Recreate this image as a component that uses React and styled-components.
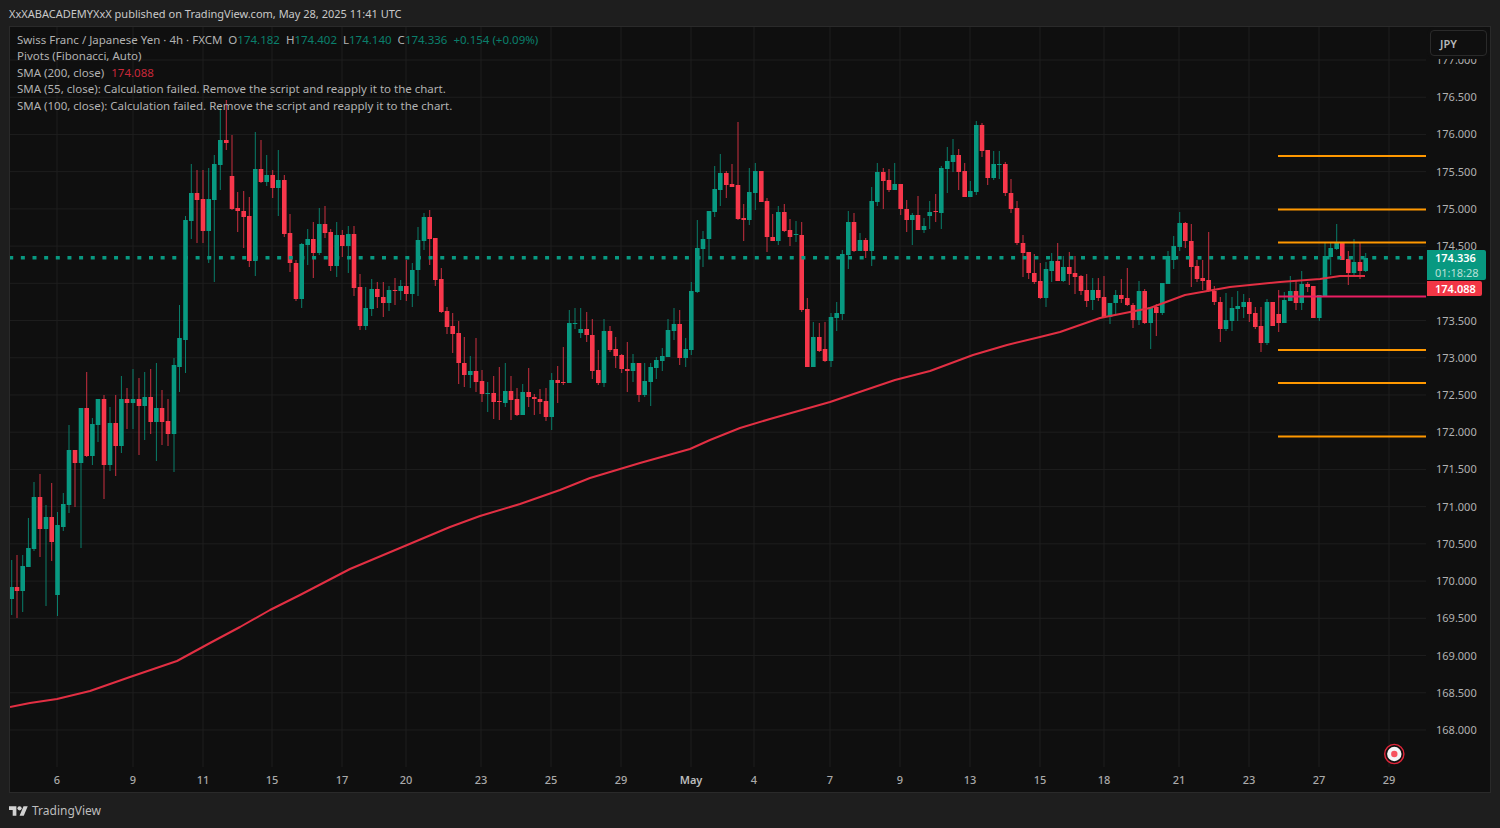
import React from 'react'
import styled, { createGlobalStyle } from 'styled-components'

const UI_FONT = '"Noto Sans", "Open Sans", "Liberation Sans", sans-serif'
const GREEN = '#089981'
const RED = '#f7374b'

// [x, body top, body bottom, wick top, wick bottom, colour]
const CANDLES = [
  [11.7,587,599,560,615,'g'],[17,587,591,555,618,'r'],[22.7,566,591,555,612,'g'],[28.4,548,567,518,567,'g'],
  [34,497,549,482,551,'g'],[40,497,529,474,557,'r'],[46,517,529,505,606,'g'],[51.7,517,542,483,561,'r'],
  [57.5,525,595,512,616,'g'],[63.3,504,527,493,531,'g'],[69,450,505,425,513,'g'],[75,450,463,450,507,'r'],
  [81,408,463,408,548,'g'],[86.7,408,456,372,457,'r'],[92.4,424,456,418,465,'g'],[98,399,425,399,442,'g'],
  [104,399,465,395,499,'r'],[110,423,465,407,471,'g'],[115.7,423,446,395,476,'r'],[121.4,399,446,376,453,'g'],
  [127,399,403,388,429,'r'],[133,399,403,369,429,'g'],[139,399,406,378,455,'r'],[144.7,397,406,372,440,'g'],
  [150.7,397,422,369,434,'r'],[156.4,408,422,363,461,'g'],[162,408,422,390,445,'r'],[168,421,434,399,446,'r'],
  [174,365,434,358,472,'g'],[179.5,338,367,305,392,'g'],[185.5,220,340,216,373,'g'],[191.3,193,221,164,239,'g'],
  [197,193,200,170,243,'r'],[203,199,231,170,243,'r'],[208.7,199,231,168,263,'g'],[214.3,164,200,155,282,'g'],
  [220.3,140,165,108,190,'g'],[226.3,140,143,100,150,'r'],[232,176,209,135,210,'r'],[237.7,208,211,192,232,'r'],
  [243.7,211,217,191,248,'r'],[249.3,216,261,197,267,'r'],[255.3,169,261,132,276,'g'],[261,169,182,140,183,'r'],
  [266.7,175,182,155,186,'g'],[272.7,175,188,170,198,'r'],[278.3,180,188,150,216,'g'],[284.3,180,234,175,237,'r'],
  [290,233,263,214,272,'r'],[296,263,299,260,301,'r'],[301.7,244,299,243,308,'g'],[307.7,239,245,229,265,'g'],
  [313.3,239,253,222,278,'r'],[319.3,224,253,208,255,'g'],[325,224,233,206,238,'r'],[330.7,232,266,229,271,'r'],
  [336.7,235,266,222,277,'g'],[342.3,235,246,230,257,'r'],[348.3,234,246,226,273,'g'],[354,234,288,226,296,'r'],
  [360,287,326,274,330,'r'],[365.7,308,326,287,330,'g'],[371.7,289,309,279,316,'g'],[377.3,289,297,282,308,'r'],
  [383.3,297,303,282,317,'r'],[389,290,303,286,311,'g'],[395,290,291,278,305,'r'],[400.7,286,291,280,300,'g'],
  [406.3,286,294,260,301,'r'],[412.3,270,294,263,307,'g'],[418,240,270,227,296,'g'],[424,217,241,213,250,'g'],
  [429.7,217,239,210,265,'r'],[435.3,238,280,239,286,'r'],[441.3,279,312,268,313,'r'],[447,311,327,307,334,'r'],
  [452.7,326,334,313,353,'r'],[458.7,333,363,321,384,'r'],[464.3,363,375,337,387,'r'],[470.3,371,375,356,388,'g'],
  [476,371,382,338,392,'r'],[482,381,394,370,402,'r'],[487.7,393,394,382,412,'g'],[493.7,393,402,376,419,'r'],
  [499.3,401,402,367,420,'r'],[505.3,391,403,363,407,'g'],[511,391,400,376,420,'r'],[517,399,415,388,416,'r'],
  [522.7,392,415,384,415,'g'],[528.7,392,397,368,407,'r'],[534.3,397,399,394,415,'r'],[540,399,402,389,414,'r'],
  [546,401,417,388,421,'r'],[551.7,380,417,373,430,'g'],[557.7,380,383,366,403,'r'],[563.3,382,383,347,385,'r'],
  [569.3,323,383,310,383,'g'],[575,323,324,308,329,'g'],[580.7,329,333,308,338,'g'],[586.7,329,335,312,342,'r'],
  [592.3,335,371,319,379,'r'],[598.3,370,383,350,385,'r'],[604,331,383,319,387,'g'],[610,331,350,326,352,'r'],
  [615.7,349,356,337,368,'r'],[621.7,355,369,354,373,'r'],[627.3,369,371,342,392,'r'],[633,363,371,354,382,'g'],
  [639,363,395,363,402,'r'],[644.7,381,395,363,397,'g'],[650.7,367,382,363,406,'g'],[656.3,360,368,357,379,'g'],
  [662.3,356,361,348,371,'g'],[668,330,357,319,357,'g'],[674,324,331,308,340,'g'],[679.7,324,358,310,365,'r'],
  [685.7,349,358,338,367,'g'],[691.3,291,350,282,355,'g'],[697.3,248,292,220,293,'g'],[703,239,249,231,267,'g'],
  [709,211,239,211,256,'g'],[714.7,189,212,166,217,'g'],[720.3,173,190,154,206,'g'],[726.3,173,185,171,198,'r'],
  [732,184,187,164,187,'r'],[738,185,219,122,220,'r'],[743.7,218,220,204,241,'r'],[749.3,192,220,168,225,'g'],
  [755.3,171,193,163,210,'g'],[761.3,171,202,171,202,'r'],[767,201,237,198,252,'r'],[772.7,237,241,214,241,'r'],
  [778.3,212,241,206,245,'g'],[784.3,212,231,204,232,'r'],[790,230,237,219,246,'r'],[796,234,235,221,242,'g'],
  [801.7,235,310,222,312,'r'],[807.3,309,367,298,367,'r'],[813.3,337,367,322,367,'g'],[819.3,337,351,323,352,'r'],
  [825,349,361,322,362,'r'],[831,317,361,313,367,'g'],[836.7,313,318,302,331,'g'],[842.3,254,314,250,320,'g'],
  [848.3,222,255,211,269,'g'],[854,222,251,213,252,'r'],[860,240,251,233,251,'g'],[865.7,240,251,238,258,'r'],
  [871.7,201,251,187,266,'g'],[877.3,172,202,163,206,'g'],[883.3,172,181,168,209,'r'],[889,180,190,169,192,'r'],
  [894.7,184,190,163,190,'g'],[900.7,184,209,184,215,'r'],[906.7,209,220,200,232,'r'],[912.3,215,220,213,245,'g'],
  [918,215,230,196,230,'r'],[924,226,230,218,233,'g'],[929.7,212,216,201,229,'g'],[935.7,211,212,194,222,'r'],
  [941.3,168,213,166,229,'g'],[947.3,161,169,147,193,'g'],[953,155,162,139,172,'g'],[958.7,155,172,149,190,'r'],
  [964.7,171,197,163,197,'r'],[970.3,191,197,181,197,'g'],[976.3,125,192,121,195,'g'],[982,125,151,123,157,'r'],
  [987.7,150,178,150,185,'r'],[993.7,164,178,151,180,'g'],[999.3,164,165,151,179,'g'],[1005.3,164,193,162,196,'r'],
  [1011,193,209,179,213,'r'],[1017,208,243,201,245,'r'],[1023,243,253,235,277,'r'],[1028.7,252,273,252,279,'r'],
  [1034.3,273,282,254,284,'r'],[1040.3,281,298,263,299,'r'],[1046,269,298,262,307,'g'],[1051.7,261,271,253,282,'g'],
  [1057.7,261,281,243,281,'r'],[1063.3,267,281,256,282,'g'],[1069.3,267,274,252,285,'r'],[1075,273,277,256,294,'r'],
  [1081,276,291,275,295,'r'],[1086.7,290,301,274,307,'r'],[1092.7,290,300,278,310,'g'],[1098.3,290,298,278,301,'r'],
  [1104,297,317,276,317,'r'],[1110,303,317,303,324,'g'],[1115.7,295,303,290,315,'g'],[1121.3,295,299,279,303,'r'],
  [1127.3,298,305,268,306,'r'],[1133,305,320,303,328,'r'],[1139,291,320,281,325,'g'],[1144.7,291,323,289,324,'r'],
  [1150.7,307,323,307,349,'g'],[1156.3,307,313,304,336,'r'],[1162.3,283,313,283,315,'g'],[1168,256,284,251,284,'g'],
  [1173.7,246,260,236,269,'g'],[1179.7,223,247,212,251,'g'],[1185.3,223,241,222,248,'r'],[1191.3,241,267,224,287,'r'],
  [1197,266,279,260,282,'r'],[1202.7,278,281,260,290,'r'],[1208.7,280,291,232,292,'r'],[1214.3,291,302,286,305,'r'],
  [1220.3,302,329,297,342,'r'],[1226,320,329,293,331,'g'],[1232,308,321,297,331,'g'],[1237.7,306,309,291,321,'g'],
  [1243.7,302,307,294,318,'g'],[1249.3,302,314,298,322,'r'],[1255.3,313,327,307,329,'r'],[1261,326,343,307,352,'r'],
  [1267,302,343,299,345,'g'],[1272.7,302,326,302,326,'r'],[1278.7,314,323,290,332,'r'],[1284.3,300,323,292,323,'g'],
  [1290.3,291,301,276,301,'g'],[1296,291,303,281,310,'r'],[1301.7,284,303,271,310,'g'],[1307.7,284,287,282,292,'r'],
  [1313.3,286,318,286,318,'r'],[1319.3,295,318,295,321,'g'],[1325,256,296,242,297,'g'],[1330.7,248,257,243,275,'g'],
  [1336.7,242,249,224,250,'g'],[1342.3,242,260,242,260,'r'],[1348.3,259,273,251,285,'r'],[1354,262,273,239,275,'g'],
  [1360,262,271,243,279,'r'],[1365.7,258,271,253,272,'g'],
]

const SMA_POINTS = [
  [10,707],[30,703],[57,699],[90,691],[130,677],[177,661],[210,643],[240,627],[270,610],[300,595],[350,569],
  [400,548],[450,527],[480,516],[520,504],[560,490],[590,478],[640,463],[690,449],[710,440],[740,428],[770,419],
  [830,402],[895,380],[930,371],[973,355],[1007,345],[1040,337],[1060,332],[1100,318],[1150,308],[1185,295],
  [1230,287],[1280,282],[1320,279],[1340,276],[1365,276],
]

const PIVOTS = [156, 209.5, 242.5, 350, 383, 436.5]

const PRICES = [
  '177.000','176.500','176.000','175.500','175.000','174.500','174.000','173.500','173.000','172.500',
  '172.000','171.500','171.000','170.500','170.000','169.500','169.000','168.500','168.000',
]
// the 174.000 label sits behind the live price tags
const HIDDEN_PRICE = '174.000'
const priceY = i => 60 + i * 37.22

const TICKS = [
  [57,'6'],[133,'9'],[203,'11'],[272,'15'],[342,'17'],[406,'20'],[481,'23'],[551,'25'],[621,'29'],[691,'May'],
  [754,'4'],[830,'7'],[900,'9'],[970,'13'],[1040,'15'],[1104,'18'],[1179,'21'],[1249,'23'],[1319,'27'],[1389,'29'],
]

const GlobalStyle = createGlobalStyle`
  html, body { margin: 0; height: 100%; background: #1e1e1e; }
  #root { height: 100%; }
`

const Page = styled.div`
  display: flex;
  flex-direction: column;
  height: 100vh;
  background: #1e1e1e;
  font-family: ${UI_FONT};
`

const TopBar = styled.div`
  height: 26px;
  flex: none;
  display: flex;
  align-items: center;
  padding-left: 9px;
  color: #c9c9c9;
  font-size: 11px;
`

const ChartFrame = styled.div`
  position: relative;
  flex: 1;
  min-height: 0;
  margin: 0 9px;
  border: 1px solid #2a2a2a;
  background: #0f0f0f;
  display: grid;
  grid-template-columns: 1416px 64px;
  grid-template-rows: 740px 25px;
`

const Pane = styled.svg`
  display: block;
  width: 1416px;
  height: 740px;
`

const PriceAxis = styled.svg`
  display: block;
  width: 64px;
  height: 740px;
  fill: #b2b2b2;
  font-family: ${UI_FONT};
  font-size: 11px;
`

const TimeAxis = styled.svg`
  display: block;
  grid-column: 1 / 3;
  width: 1480px;
  height: 25px;
  font-family: ${UI_FONT};
  font-size: 11px;
`

const TimeLabel = styled.text`
  text-anchor: middle;
  fill: ${p => (p.$strong ? '#bbbbbb' : '#aaaaaa')};
  font-weight: ${p => (p.$strong ? 600 : 500)};
`

const Legend = styled.div`
  position: absolute;
  top: 5px;
  left: 7px;
  display: flex;
  flex-direction: column;
  color: #b2b2b2;
  font-size: 11.5px;
  line-height: 16.4px;
`

const LegendRow = styled.div`
  display: flex;
  gap: ${p => p.$gap || 0}px;
  white-space: nowrap;
`

const Value = styled.span`
  color: ${p => (p.$tone === 'down' ? '#c8283a' : '#0a7f6c')};
`

const CurrencyButton = styled.div`
  position: absolute;
  top: 3px;
  right: 3px;
  box-sizing: border-box;
  width: 57px;
  height: 26px;
  padding-left: 9px;
  display: flex;
  align-items: center;
  border: 1px solid #2a2a2a;
  border-radius: 4px;
  background: #0f0f0f;
  box-shadow: 0 0 0 3px #0f0f0f;
  color: #b8b8b8;
  font-size: 11px;
  font-weight: 600;
`

const PriceTag = styled.div`
  position: absolute;
  left: 1417px;
  top: ${p => p.$top}px;
  width: ${p => p.$width}px;
  box-sizing: border-box;
  padding-left: 8px;
  background: ${p => p.$bg};
  border-radius: 0 2px 2px 0;
  color: #ffffff;
  font-size: 11px;
  font-weight: 600;
  line-height: 15px;
`

const TagTimer = styled.div`
  color: #b9e0d8;
  font-weight: 400;
`

const Footer = styled.div`
  height: 35px;
  flex: none;
  box-sizing: border-box;
  padding: 0 0 0 9px;
  display: flex;
  align-items: center;
  gap: 4px;
  color: #bdbdbd;
  font-size: 12px;
`

const Candle = ({ c }) => {
  const [x, top, bottom, wickTop, wickBottom, dir] = c
  const color = dir === 'g' ? GREEN : RED
  return (
    <g fill={color}>
      <rect x={x - 0.5} y={wickTop} width={1} height={wickBottom - wickTop} opacity={0.8} />
      <rect x={x - 2.3} y={top} width={4.6} height={Math.max(bottom - top, 1)} />
    </g>
  )
}

const TvLogo = () => (
  <svg width="19" height="10" viewBox="0 4 36 18" fill="#d2d2d2">
    <path d="M14 22H7V11H0V4h14v18zM28 22h-8l7.5-18h8L28 22z" />
    <circle cx="20" cy="8" r="4" />
  </svg>
)

export default function App() {
  const sma = SMA_POINTS.map(p => p.join(',')).join(' ')

  return (
    <Page>
      <GlobalStyle />
      <TopBar>XxXABACADEMYXxX published on TradingView.com, May 28, 2025 11:41 UTC</TopBar>

      <ChartFrame>
        <Pane viewBox="10 27 1416 740">
          {PRICES.map((_, i) => (
            <line key={i} x1="10" x2="1426" y1={priceY(i)} y2={priceY(i)} stroke="#1e1e1e" />
          ))}
          {TICKS.map(([x]) => (
            <line key={x} x1={x} x2={x} y1="27" y2="767" stroke="#1e1e1e" />
          ))}

          {CANDLES.map(c => <Candle key={c[0]} c={c} />)}

          <polyline points={sma} fill="none" stroke="#e22f43" strokeWidth="2" strokeLinejoin="round" />

          {PIVOTS.map(y => (
            <line key={y} x1="1278" x2="1426" y1={y} y2={y} stroke="#ff9800" strokeWidth="2" />
          ))}
          <line x1="1278" x2="1426" y1="296.5" y2="296.5" stroke="#e91e63" strokeWidth="2" />

          <line x1="9.2" x2="1426" y1="257.7" y2="257.7" stroke="#089981" strokeWidth="3.4" strokeDasharray="4 7.65" />

          <circle cx="1394.3" cy="754" r="9.6" fill="#0f0f0f" stroke="#e0263a" strokeWidth="1.4" />
          <circle cx="1394.3" cy="754" r="7.2" fill="#f4f4f6" />
          <circle cx="1394.3" cy="754" r="3.2" fill="#f7525f" />
        </Pane>

        <PriceAxis viewBox="1426 27 64 740">
          {PRICES.map((p, i) => (
            p !== HIDDEN_PRICE && <text key={p} x="1436" y={priceY(i) + 4}>{p}</text>
          ))}
        </PriceAxis>

        <TimeAxis viewBox="10 767 1480 25">
          {TICKS.map(([x, label]) => (
            <TimeLabel key={x} x={x} y="784" $strong={label === 'May'}>{label}</TimeLabel>
          ))}
        </TimeAxis>

        <Legend>
          <LegendRow $gap={6}>
            <span>Swiss Franc / Japanese Yen · 4h · FXCM</span>
            <span>O<Value>174.182</Value></span>
            <span>H<Value>174.402</Value></span>
            <span>L<Value>174.140</Value></span>
            <span>C<Value>174.336</Value></span>
            <Value>+0.154 (+0.09%)</Value>
          </LegendRow>
          <LegendRow>Pivots (Fibonacci, Auto)</LegendRow>
          <LegendRow $gap={7}>
            <span>SMA (200, close)</span>
            <Value $tone="down">174.088</Value>
          </LegendRow>
          <LegendRow>SMA (55, close): Calculation failed. Remove the script and reapply it to the chart.</LegendRow>
          <LegendRow>SMA (100, close): Calculation failed. Remove the script and reapply it to the chart.</LegendRow>
        </Legend>

        <CurrencyButton>JPY</CurrencyButton>

        <PriceTag $top={223} $width={59} $bg="#089981">
          174.336
          <TagTimer>01:18:28</TagTimer>
        </PriceTag>
        <PriceTag $top={254} $width={55} $bg="#f23645">174.088</PriceTag>
      </ChartFrame>

      <Footer>
        <TvLogo />
        TradingView
      </Footer>
    </Page>
  )
}
